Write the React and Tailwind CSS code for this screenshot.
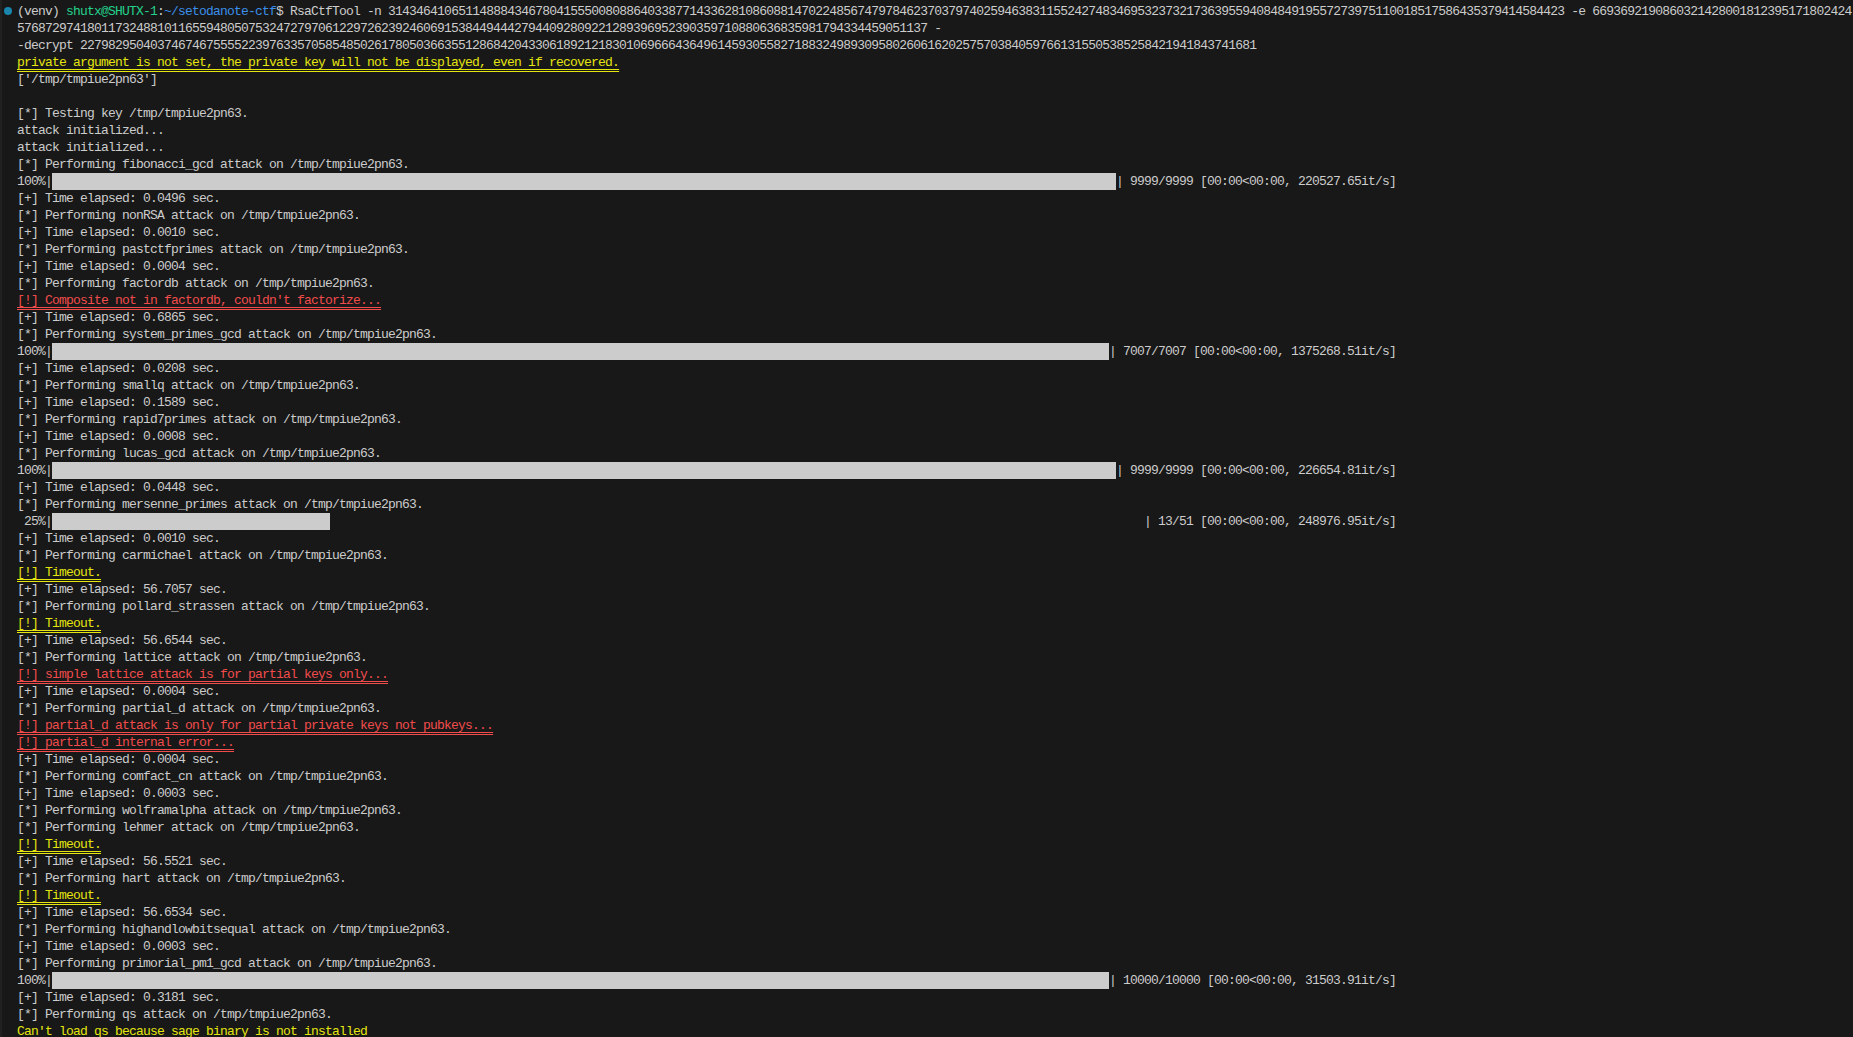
import React from "react";

const t = (name) => `[*] Performing ${name} attack on /tmp/tmpiue2pn63.`;
const e = (sec) => `[+] Time elapsed: ${sec} sec.`;

// terminal output, one entry per row
const rows = [
  { text: t("fibonacci_gcd") },
  { pct: "100%", barW: "w-[1064px]", tail: "| 9999/9999 [00:00<00:00, 220527.65it/s]" },
  { text: e("0.0496") },
  { text: t("nonRSA") },
  { text: e("0.0010") },
  { text: t("pastctfprimes") },
  { text: e("0.0004") },
  { text: t("factordb") },
  { err: "[!] Composite not in factordb, couldn't factorize..." },
  { text: e("0.6865") },
  { text: t("system_primes_gcd") },
  { pct: "100%", barW: "w-[1057px]", tail: "| 7007/7007 [00:00<00:00, 1375268.51it/s]" },
  { text: e("0.0208") },
  { text: t("smallq") },
  { text: e("0.1589") },
  { text: t("rapid7primes") },
  { text: e("0.0008") },
  { text: t("lucas_gcd") },
  { pct: "100%", barW: "w-[1064px]", tail: "| 9999/9999 [00:00<00:00, 226654.81it/s]" },
  { text: e("0.0448") },
  { text: t("mersenne_primes") },
  { pct: " 25%", barW: "w-[278px]", tail: "| 13/51 [00:00<00:00, 248976.95it/s]" },
  { text: e("0.0010") },
  { text: t("carmichael") },
  { warn: "[!] Timeout." },
  { text: e("56.7057") },
  { text: t("pollard_strassen") },
  { warn: "[!] Timeout." },
  { text: e("56.6544") },
  { text: t("lattice") },
  { err: "[!] simple lattice attack is for partial keys only..." },
  { text: e("0.0004") },
  { text: t("partial_d") },
  { err: "[!] partial_d attack is only for partial private keys not pubkeys..." },
  { err: "[!] partial_d internal error..." },
  { text: e("0.0004") },
  { text: t("comfact_cn") },
  { text: e("0.0003") },
  { text: t("wolframalpha") },
  { text: t("lehmer") },
  { warn: "[!] Timeout." },
  { text: e("56.5521") },
  { text: t("hart") },
  { warn: "[!] Timeout." },
  { text: e("56.6534") },
  { text: t("highandlowbitsequal") },
  { text: e("0.0003") },
  { text: t("primorial_pm1_gcd") },
  { pct: "100%", barW: "w-[1057px]", tail: "| 10000/10000 [00:00<00:00, 31503.91it/s]" },
  { text: e("0.3181") },
  { text: t("qs") },
];

const Line = ({ children }) => <div className="h-[17px] whitespace-pre">{children}</div>;

const Flagged = ({ color, children }) => (
  <Line>
    <span className={`underline decoration-double decoration-1 underline-offset-[3px] ${color}`}>
      {children}
    </span>
  </Line>
);

const Bar = ({ pct, barW, tail }) => (
  <div className="h-[17px] w-[1379px] flex whitespace-pre">
    <span>{pct}|</span>
    <span className={`h-[17px] bg-[#cccccc] ${barW}`} />
    <span className="ml-auto">{tail}</span>
  </div>
);

const App = () => {
  return (
    <div className="h-screen overflow-hidden bg-[#181818] border-l-2 border-[#212121] pl-[15px] pt-[3px] text-[#cccccc] font-['Liberation_Mono',monospace] text-[13px] leading-[17px] tracking-[-0.8px]">
      <div className="relative h-[17px] whitespace-pre">
        <span className="absolute -left-[13px] top-[4px] w-[8px] h-[8px] rounded-full bg-[#1a85ad]" />
        (venv) <span className="text-[#23d18b]">shutx@SHUTX-1</span>:<span className="text-[#3b8eea]">~/setodanote-ctf</span>$ RsaCtfTool -n 314346410651148884346780415550080886403387714336281086088147022485674797846237037974025946383115524274834695323732173639559408484919557273975110018517586435379414584423 -e 6693692190860321428001812395171802424
      </div>
      <Line>5768729741801173248810116559480507532472797061229726239246069153844944427944092809221289396952390359710880636835981794334459051137 -</Line>
      <Line>-decrypt 227982950403746746755552239763357058548502617805036635512868420433061892121830106966643649614593055827188324989309580260616202575703840597661315505385258421941843741681</Line>
      <Flagged color="text-[#e5e510]">private argument is not set, the private key will not be displayed, even if recovered.</Flagged>
      <Line>['/tmp/tmpiue2pn63']</Line>
      <Line> </Line>
      <Line>[*] Testing key /tmp/tmpiue2pn63.</Line>
      <Line>attack initialized...</Line>
      <Line>attack initialized...</Line>
      {rows.map((r, i) => {
        if (r.pct) return <Bar key={i} {...r} />;
        if (r.err) return <Flagged key={i} color="text-[#f14c4c]">{r.err}</Flagged>;
        if (r.warn) return <Flagged key={i} color="text-[#e5e510]">{r.warn}</Flagged>;
        return <Line key={i}>{r.text}</Line>;
      })}
      <Line><span className="text-[#e5e510]">Can't load qs because sage binary is not installed</span></Line>
    </div>
  );
};

export default App;
